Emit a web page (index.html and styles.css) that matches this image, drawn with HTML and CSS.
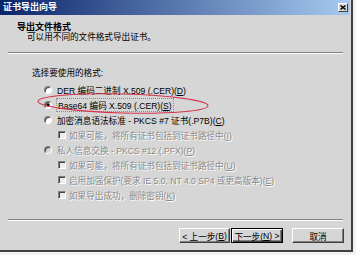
FILE: index.html
```html
<!DOCTYPE html>
<html lang="zh-CN">
<head>
<meta charset="utf-8">
<title>证书导出向导</title>
<link rel="stylesheet" href="styles.css">
</head>
<body>
<div class="window">
  <div class="titlebar">
    <span class="title">证书导出向导</span>
    <span class="close"><svg width="6" height="5" viewBox="0 0 6 5"><path d="M0.5 0.5 L5.5 4.5 M5.5 0.5 L0.5 4.5" stroke="#000" stroke-width="1.4" fill="none"/></svg></span>
  </div>
  <div class="header">
    <div class="h-title">导出文件格式</div>
    <div class="h-sub">可以用不同的文件格式导出证书。</div>
  </div>
  <div class="sep"></div>
  <div class="body">
    <div class="label">选择要使用的格式:</div>
    <div class="options">
      <div class="opt"><span class="radio"></span><span>DER 编码二进制 X.509 (.CER)(<u>D</u>)</span></div>
      <div class="opt"><span class="radio checked"></span><span class="focus">Base64 编码 X.509 (.CER)(<u>S</u>)</span></div>
      <div class="opt"><span class="radio"></span><span>加密消息语法标准 - PKCS #7 证书(.P7B)(<u>C</u>)</span></div>
      <div class="opt sub disabled"><span class="check"></span><span>如果可能，将所有证书包括到证书路径中(<u>I</u>)</span></div>
      <div class="opt disabled"><span class="radio off"></span><span>私人信息交换 - PKCS #12 (.PFX)(<u>P</u>)</span></div>
      <div class="opt sub disabled"><span class="check"></span><span>如果可能，将所有证书包括到证书路径中(<u>U</u>)</span></div>
      <div class="opt sub disabled"><span class="check"></span><span>启用加强保护(要求 IE 5.0, NT 4.0 SP4 或更高版本)(<u>E</u>)</span></div>
      <div class="opt sub disabled"><span class="check"></span><span>如果导出成功，删除密钥(<u>K</u>)</span></div>
    </div>
  </div>
  <div class="sep"></div>
  <div class="footer">
    <button class="btn prev">&lt; 上一步(<u>B</u>)</button>
    <button class="btn next default">下一步(<u>N</u>) &gt;</button>
    <button class="btn cancel">取消</button>
  </div>
  <svg class="mark" width="180" height="30" viewBox="0 0 180 30"><ellipse cx="88" cy="13.5" rx="85" ry="9.5" transform="rotate(1.5 88 13.5)" fill="none" stroke="#d8334a" stroke-width="1.1"/></svg>
</div>
</body>
</html>
```

FILE: styles.css
```css
* {
  box-sizing: border-box;
  margin: 0;
  padding: 0;
}

html,
body {
  background: #f2f2f2;
}

body {
  margin: 0;
  font-family: "Liberation Sans", "Noto Sans CJK SC", sans-serif;
  font-size: 8.6px;
  color: #000;
}

.window {
  position: relative;
  width: 353px;
  height: 252px;
  background: #d6d6d6;
  border-right: 2px solid #404040;
  border-bottom: 2px solid #404040;
  display: flex;
  flex-direction: column;
}

.titlebar {
  flex: none;
  height: 15px;
  margin-right: 1px;
  padding: 0 2px 0 3px;
  display: flex;
  align-items: center;
  justify-content: space-between;
  background: linear-gradient(to right, #0a246a, #a6caf0);
}

.title {
  color: #fff;
  font-weight: bold;
  font-size: 9px;
  line-height: 15px;
}

.close {
  width: 10px;
  height: 9px;
  background: #d6d6d6;
  border: 1px solid;
  border-color: #fff #404040 #404040 #fff;
  display: flex;
  align-items: center;
  justify-content: center;
}

.header {
  flex: none;
  height: 37px;
  padding: 7px 0 0 17px;
}

.h-title {
  font-weight: bold;
  font-size: 9px;
  line-height: 10px;
}

.h-sub {
  padding-left: 10px;
  line-height: 10px;
}

.sep {
  flex: none;
  height: 2px;
  margin: 0 8px;
  border-top: 1px solid #808080;
  border-bottom: 1px solid #fff;
}

.body {
  flex: 1;
  padding: 13px 0 0 32px;
}

.label {
  line-height: 12px;
}

.options {
  margin-top: 3px;
  padding-left: 12px;
}

.opt {
  height: 15px;
  display: flex;
  align-items: center;
  gap: 5px;
  white-space: nowrap;
}

.opt.sub {
  padding-left: 14px;
  gap: 3px;
}

.opt.disabled {
  color: #8a8a8a;
  text-shadow: 1px 1px 0 #fff;
}

.radio {
  flex: none;
  width: 8px;
  height: 8px;
  border-radius: 50%;
  border: 1px solid;
  border-color: #808080 #fff #fff #808080;
  background: #fff;
  box-shadow: inset 1px 1px 0 #404040;
}

.radio.checked {
  background: radial-gradient(circle, #000 0 1.4px, #fff 1.9px);
}

.radio.off {
  background: #d6d6d6;
}

.check {
  flex: none;
  width: 8px;
  height: 8px;
  border: 1px solid;
  border-color: #808080 #fff #fff #808080;
  background: #ececec;
  box-shadow: inset 1px 1px 0 #404040;
}

.focus {
  outline: 1px dotted #8a8a8a;
  outline-offset: 0;
  padding: 0 1px;
}

.footer {
  flex: none;
  height: 29px;
  padding: 7px 7px 0 0;
  display: flex;
  justify-content: flex-end;
  align-items: flex-start;
}

.btn {
  height: 15px;
  width: 52px;
  font: inherit;
  color: #000;
  background: #d6d6d6;
  border: 1px solid;
  border-color: #fff #404040 #404040 #fff;
  box-shadow: inset -1px -1px 0 #808080;
  display: flex;
  align-items: center;
  justify-content: center;
  white-space: nowrap;
}

.btn.prev {
  width: 51px;
}

.btn.next {
  margin-left: 1px;
}

.btn.cancel {
  margin-left: 9px;
}

.btn.default {
  border: 1px solid #000;
  box-shadow: inset 1px 1px 0 #fff, inset -1px -1px 0 #404040, inset -2px -2px 0 #808080;
}

.mark {
  position: absolute;
  left: 35px;
  top: 90px;
  pointer-events: none;
}
```
